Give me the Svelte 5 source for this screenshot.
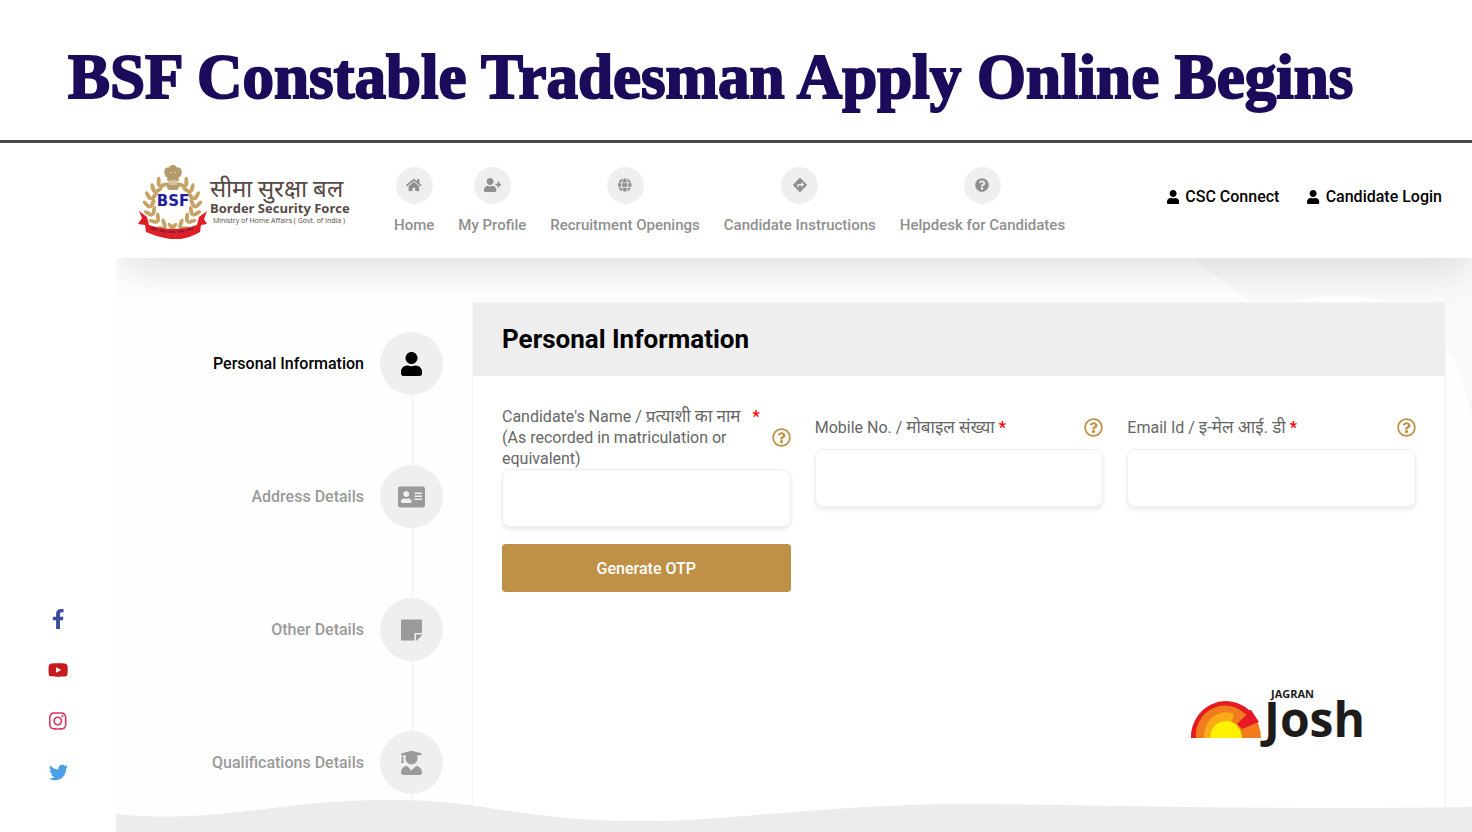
<script>
    const icons = {
        user: ['0 0 448 512', 'M224 256c70.7 0 128-57.3 128-128S294.7 0 224 0 96 57.3 96 128s57.3 128 128 128zm89.6 32h-16.7c-22.2 10.2-46.9 16-72.9 16s-50.6-5.8-72.9-16h-16.7C60.2 288 0 348.2 0 422.4V464c0 26.5 21.5 48 48 48h352c26.5 0 48-21.5 48-48v-41.6c0-74.2-60.2-134.4-134.4-134.4z'],
        home: ['0 0 576 512', 'M280.37 148.26L96 300.11V464a16 16 0 0 0 16 16l112.06-.29a16 16 0 0 0 15.92-16V368a16 16 0 0 1 16-16h64a16 16 0 0 1 16 16v95.64a16 16 0 0 0 16 16.05L464 480a16 16 0 0 0 16-16V300L295.67 148.26a12.19 12.19 0 0 0-15.3 0zM571.6 251.47L488 182.56V44.05a12 12 0 0 0-12-12h-56a12 12 0 0 0-12 12v72.61L318.47 43a48 48 0 0 0-61 0L4.34 251.47a12 12 0 0 0-1.6 16.9l25.5 31A12 12 0 0 0 45.15 301l235.22-193.74a12.19 12.19 0 0 1 15.3 0L530.9 301a12 12 0 0 0 16.9-1.6l25.5-31a12 12 0 0 0-1.7-16.93z'],
        userPlus: ['0 0 640 512', 'M624 208h-64v-64c0-8.8-7.2-16-16-16h-32c-8.8 0-16 7.2-16 16v64h-64c-8.8 0-16 7.2-16 16v32c0 8.8 7.2 16 16 16h64v64c0 8.8 7.2 16 16 16h32c8.8 0 16-7.2 16-16v-64h64c8.8 0 16-7.2 16-16v-32c0-8.8-7.2-16-16-16zm-400 48c70.7 0 128-57.3 128-128S294.7 0 224 0 96 57.3 96 128s57.3 128 128 128zm89.6 32h-16.7c-22.2 10.2-46.9 16-72.9 16s-50.6-5.8-72.9-16h-16.7C60.2 288 0 348.2 0 422.4V464c0 26.5 21.5 48 48 48h352c26.5 0 48-21.5 48-48v-41.6c0-74.2-60.2-134.4-134.4-134.4z'],
        globe: ['0 0 496 512', 'M336.5 160C322 70.7 287.8 8 248 8s-74 62.7-88.5 152h177zM152 256c0 22.2 1.2 43.5 3.3 64h185.3c2.1-20.5 3.3-41.8 3.3-64s-1.2-43.5-3.3-64H155.3c-2.1 20.5-3.3 41.8-3.3 64zm324.7-96c-28.6-67.9-86.5-120.4-158-141.6 24.4 33.8 41.2 84.7 50 141.6h108zM177.2 18.4C105.8 39.6 47.8 92.1 19.3 160h108c8.7-56.9 25.5-107.8 49.9-141.6zM487.4 192H372.7c2.1 21 3.3 42.5 3.3 64s-1.2 43-3.3 64h114.6c5.5-20.5 8.6-41.8 8.6-64s-3.1-43.5-8.5-64zM120 256c0-21.5 1.2-43 3.3-64H8.6C3.2 212.5 0 233.8 0 256s3.2 43.5 8.6 64h114.6c-2-21-3.2-42.5-3.2-64zm39.5 96c14.5 89.3 48.7 152 88.5 152s74-62.7 88.5-152h-177zm159.3 141.6c71.4-21.2 129.4-73.7 158-141.6h-108c-8.8 56.9-25.6 107.8-50 141.6zM19.3 352c28.6 67.9 86.5 120.4 158 141.6-24.4-33.8-41.2-84.7-50-141.6h-108z'],
        directions: ['0 0 512 512', 'M502.61 233.32L278.68 9.39c-12.52-12.52-32.83-12.52-45.36 0L9.39 233.32c-12.52 12.53-12.52 32.83 0 45.36l223.93 223.93c12.52 12.53 32.83 12.53 45.36 0l223.93-223.93c12.52-12.53 12.52-32.83 0-45.36zm-100.98 12.56l-84.21 77.73c-5.12 4.73-13.43 1.1-13.43-5.88V264h-96v64c0 4.42-3.58 8-8 8h-32c-4.42 0-8-3.58-8-8v-80c0-17.67 14.33-32 32-32h112v-53.73c0-6.97 8.3-10.61 13.43-5.88l84.21 77.73c3.43 3.17 3.43 8.59 0 11.76z'],
        question: ['0 0 512 512', 'M504 256c0 136.997-111.043 248-248 248S8 392.997 8 256C8 119.083 119.043 8 256 8s248 111.083 248 248zM262.655 90c-54.497 0-89.255 22.957-116.549 63.758-3.536 5.286-2.353 12.415 2.715 16.258l34.699 26.31c5.205 3.947 12.621 3.008 16.665-2.122 17.864-22.658 30.113-35.797 57.303-35.797 20.429 0 45.698 13.148 45.698 32.958 0 14.976-12.363 22.667-32.534 33.976C247.128 238.528 216 254.941 216 296v4c0 6.627 5.373 12 12 12h56c6.627 0 12-5.373 12-12v-1.333c0-28.462 83.186-29.647 83.186-106.667 0-58.002-60.165-102-116.531-102zM256 338c-25.365 0-46 20.635-46 46 0 25.364 20.635 46 46 46s46-20.636 46-46c0-25.365-20.635-46-46-46z'],
        help: ['0 0 512 512', 'M256 8C119.043 8 8 119.083 8 256c0 136.997 111.043 248 248 248s248-111.003 248-248C504 119.083 392.957 8 256 8zm0 448c-110.532 0-200-89.431-200-200 0-110.495 89.472-200 200-200 110.491 0 200 89.471 200 200 0 110.53-89.431 200-200 200zm107.244-255.2c0 67.052-72.421 68.084-72.421 92.863V300c0 6.627-5.373 12-12 12h-45.647c-6.627 0-12-5.373-12-12v-8.659c0-35.745 27.1-50.034 47.579-61.516 17.561-9.845 28.324-16.541 28.324-29.579 0-17.246-21.999-28.693-39.784-28.693-23.189 0-33.894 10.977-48.942 29.969-4.057 5.12-11.46 6.071-16.666 2.124l-27.824-21.098c-5.107-3.872-6.251-11.066-2.644-16.363C184.846 131.491 214.94 112 261.794 112c49.071 0 101.45 38.304 101.45 88.8zM298 368c0 23.159-18.841 42-42 42s-42-18.841-42-42 18.841-42 42-42 42 18.841 42 42z'],
        card: ['0 0 576 512', 'M528 32H48C21.5 32 0 53.5 0 80v352c0 26.5 21.5 48 48 48h480c26.5 0 48-21.5 48-48V80c0-26.5-21.5-48-48-48zm-352 96c35.3 0 64 28.7 64 64s-28.7 64-64 64-64-28.7-64-64 28.7-64 64-64zm112 236.8c0 10.6-10 19.2-22.4 19.2H86.4C74 384 64 375.4 64 364.8v-19.2c0-31.8 30.1-57.6 67.2-57.6h5c12.3 5.1 25.7 8 39.8 8s27.6-2.9 39.8-8h5c37.1 0 67.2 25.8 67.2 57.6v19.2zM512 312c0 4.4-3.6 8-8 8H360c-4.4 0-8-3.6-8-8v-16c0-4.4 3.6-8 8-8h144c4.4 0 8 3.6 8 8v16zm0-64c0 4.4-3.6 8-8 8H360c-4.4 0-8-3.6-8-8v-16c0-4.4 3.6-8 8-8h144c4.4 0 8 3.6 8 8v16zm0-64c0 4.4-3.6 8-8 8H360c-4.4 0-8-3.6-8-8v-16c0-4.4 3.6-8 8-8h144c4.4 0 8 3.6 8 8v16z'],
        note: ['0 0 448 512', 'M312 320h136V56c0-13.3-10.7-24-24-24H24C10.7 32 0 42.7 0 56v400c0 13.3 10.7 24 24 24h264V344c0-13.2 10.8-24 24-24zm129 55l-98 98c-4.5 4.5-10.6 7-17 7h-6V352h128v6.1c0 6.3-2.5 12.4-7 16.9z'],
        graduate: ['0 0 448 512', 'M319.4 320.6L224 416l-95.4-95.4C57.1 323.7 0 382.2 0 454.4v9.6c0 26.5 21.5 48 48 48h352c26.5 0 48-21.5 48-48v-9.6c0-72.2-57.1-130.7-128.6-133.8zM13.6 79.8l6.4 1.5v58.4c-7 4.2-12 11.5-12 20.3 0 8.4 4.6 15.4 11.1 19.7L3.5 242c-1.7 6.9 2.1 14 7.6 14h41.8c5.5 0 9.3-7.1 7.6-14l-15.6-62.3C51.4 175.4 56 168.4 56 160c0-8.8-5-16.1-12-20.3V87.1l66 15.9c-8.6 17.2-14 36.4-14 57 0 70.7 57.3 128 128 128s128-57.3 128-128c0-20.6-5.3-39.8-14-57l96.3-23.2c18.2-4.4 18.2-27.1 0-31.5l-190.4-46c-13-3.1-26.7-3.1-39.7 0L13.6 48.2c-18.1 4.4-18.1 27.2 0 31.6z'],
        facebook: ['0 0 320 512', 'M279.14 288l14.22-92.66h-88.91v-60.13c0-25.35 12.42-50.06 52.24-50.06h40.42V6.26S260.43 0 225.36 0c-73.22 0-121.08 44.38-121.08 124.72v70.62H22.89V288h81.39v224h100.17V288z'],
        youtube: ['0 0 576 512', 'M549.655 124.083c-6.281-23.65-24.787-42.276-48.284-48.597C458.781 64 288 64 288 64S117.22 64 74.629 75.486c-23.497 6.322-42.003 24.947-48.284 48.597-11.412 42.867-11.412 132.305-11.412 132.305s0 89.438 11.412 132.305c6.281 23.65 24.787 41.5 48.284 47.821C117.22 448 288 448 288 448s170.78 0 213.371-11.486c23.497-6.321 42.003-24.171 48.284-47.821 11.412-42.867 11.412-132.305 11.412-132.305s0-89.438-11.412-132.305zm-317.51 213.508V175.185l142.739 81.205-142.739 81.201z'],
        instagram: ['0 0 448 512', 'M224.1 141c-63.6 0-114.9 51.3-114.9 114.9s51.3 114.9 114.9 114.9S339 319.5 339 255.9 287.7 141 224.1 141zm0 189.6c-41.1 0-74.7-33.5-74.7-74.7s33.5-74.7 74.7-74.7 74.7 33.5 74.7 74.7-33.6 74.7-74.7 74.7zm146.4-194.3c0 14.9-12 26.8-26.8 26.8-14.9 0-26.8-12-26.8-26.8s12-26.8 26.8-26.8 26.8 12 26.8 26.8zm76.1 27.2c-1.7-35.9-9.9-67.7-36.2-93.9-26.2-26.2-58-34.4-93.9-36.2-37-2.1-147.9-2.1-184.9 0-35.8 1.7-67.6 9.9-93.9 36.1s-34.4 58-36.2 93.9c-2.1 37-2.1 147.9 0 184.9 1.7 35.9 9.9 67.7 36.2 93.9s58 34.4 93.9 36.2c37 2.1 147.9 2.1 184.9 0 35.9-1.7 67.7-9.9 93.9-36.2 26.2-26.2 34.4-58 36.2-93.9 2.1-37 2.1-147.8 0-184.8zM398.8 388c-7.8 19.6-22.9 34.7-42.6 42.6-29.5 11.7-99.5 9-132.1 9s-102.7 2.6-132.1-9c-19.6-7.8-34.7-22.9-42.6-42.6-11.7-29.5-9-99.5-9-132.1s-2.6-102.7 9-132.1c7.8-19.6 22.9-34.7 42.6-42.6 29.5-11.7 99.5-9 132.1-9s102.7-2.6 132.1 9c19.6 7.8 34.7 22.9 42.6 42.6 11.7 29.5 9 99.5 9 132.1s2.7 102.7-9 132.1z'],
        twitter: ['0 0 512 512', 'M459.37 151.716c.325 4.548.325 9.097.325 13.645 0 138.72-105.583 298.558-298.558 298.558-59.452 0-114.68-17.219-161.137-47.106 8.447.974 16.568 1.299 25.34 1.299 49.055 0 94.213-16.568 130.274-44.832-46.132-.975-84.792-31.188-98.112-72.772 6.498.974 12.995 1.624 19.818 1.624 9.421 0 18.843-1.3 27.614-3.573-48.081-9.747-84.143-51.98-84.143-102.985v-1.299c13.969 7.797 30.214 12.67 47.431 13.319-28.264-18.843-46.781-51.005-46.781-87.391 0-19.492 5.197-37.36 14.294-52.954 51.655 63.675 129.3 105.258 216.365 109.807-1.624-7.797-2.599-15.918-2.599-24.04 0-57.828 46.782-104.934 104.934-104.934 30.213 0 57.502 12.67 76.67 33.137 23.715-4.548 46.456-13.32 66.599-25.34-7.798 24.366-24.366 44.833-46.132 57.827 21.117-2.273 41.584-8.122 60.426-16.243-14.292 20.791-32.161 39.308-52.628 54.253z']
    }

    const menu = [
        { icon: 'home', label: 'Home' },
        { icon: 'userPlus', label: 'My Profile' },
        { icon: 'globe', label: 'Recruitment Openings' },
        { icon: 'directions', label: 'Candidate Instructions' },
        { icon: 'question', label: 'Helpdesk for Candidates' }
    ]

    const steps = [
        { icon: 'user', label: 'Personal Information' },
        { icon: 'card', label: 'Address Details' },
        { icon: 'note', label: 'Other Details' },
        { icon: 'graduate', label: 'Qualifications Details' }
    ]

    const social = ['facebook', 'youtube', 'instagram', 'twitter']

    const leaves = [
        [35, 67, -80], [26, 64, -55], [19, 58, -40], [14, 51, -25], [12, 43, -10],
        [13, 35, 5], [17, 28, 20], [22, 22, 35]
    ]

    let current = 0
    let name = ''
    let mobile = ''
    let email = ''
</script>

{#snippet icon(key)}
    <svg class="icon {key}" viewBox={icons[key][0]} aria-hidden="true"><path d={icons[key][1]} /></svg>
{/snippet}

{#snippet branch()}
    {#each leaves as [x, y, turn]}
        <g transform="translate({x} {y}) rotate({turn})">
            <ellipse cx="-3" cy="-2" rx="2" ry="5" transform="rotate(-35 -3 -2)" />
            <ellipse cx="3" cy="-2" rx="2" ry="5" transform="rotate(35 3 -2)" />
        </g>
    {/each}
{/snippet}

<div class="page">
    <div class="banner">
        <h1>BSF Constable Tradesman Apply Online Begins</h1>
    </div>

    <div class="body">
        <aside class="social">
            {#each social as key}
                <a href="#{key}" aria-label={key}>{@render icon(key)}</a>
            {/each}
        </aside>

        <div class="site">
            <header>
                <a class="brand" href="#home">
                    <svg class="emblem" viewBox="0 0 70 76" aria-hidden="true">
                        <g fill="#c6a264">
                            {@render branch()}
                            <g transform="translate(69 0) scale(-1 1)">{@render branch()}</g>
                        </g>
                        <path d="M20 30h30v16H20z" fill="#fff" />
                        <g fill="#b59b6a">
                            <circle cx="35" cy="6" r="4" />
                            <path d="M27 6q2-3 5-1v9h-4q-3-4-1-8zM43 6q-2-3-5-1v9h4q3-4 1-8z" />
                            <path d="M30 10h10l1 7-3 3h-6l-3-3zM29 20h12v5l-2 2h-8l-2-2z" />
                            <path d="M31 17h8v5h-8z" fill="#d5c298" />
                        </g>
                        <path d="M1 48l8 6 2 8q24 8 48 0l2-8 8-6-3 8 3 5-6 1-1 7q-8 5-19 7-8 1-16-1Q17 73 8 69l-1-7-7-1 4-6z" fill="#de1f26" />
                        <path d="M13 65q22 8 44 0" fill="none" stroke="#8e1d3d" stroke-width="2" stroke-dasharray="7 2" />
                        <text x="35" y="43" text-anchor="middle">BSF</text>
                    </svg>
                    <span class="brand-text">
                        <span class="hindi">सीमा सुरक्षा बल</span>
                        <strong>Border Security Force</strong>
                        <small>Ministry of Home Affairs ( Govt. of India )</small>
                    </span>
                </a>

                <nav>
                    {#each menu as item}
                        <a href="#menu">
                            <span class="round">{@render icon(item.icon)}</span>
                            {item.label}
                        </a>
                    {/each}
                </nav>

                <div class="login">
                    <a href="#csc">{@render icon('user')} CSC Connect</a>
                    <a href="#login">{@render icon('user')} Candidate Login</a>
                </div>
            </header>

            <main>
                <svg class="backdrop" viewBox="0 0 280 160" aria-hidden="true">
                    <path d="M0 0h280v160q-10-50-26-70L60 45z" fill="#f9f9f9" />
                    <ellipse cx="148" cy="46" rx="46" ry="8" fill="#fff" />
                </svg>

                <ol class="steps">
                    {#each steps as step, i}
                        <li class:active={i === current}>
                            <button type="button" on:click={() => (current = i)}>
                                <span>{step.label}</span>
                                <span class="round">{@render icon(step.icon)}</span>
                            </button>
                        </li>
                    {/each}
                </ol>

                <section class="panel">
                    <h2>Personal Information</h2>
                    <form on:submit|preventDefault>
                        <div class="field">
                            <div class="caption">
                                <label for="name">Candidate's Name / <span>प्रत्याशी का नाम</span> &nbsp; <b>*</b><br />(As recorded in matriculation or equivalent)</label>
                                {@render icon('help')}
                            </div>
                            <input id="name" type="text" bind:value={name} />
                        </div>
                        <div class="field">
                            <div class="caption">
                                <label for="mobile">Mobile No. / <span>मोबाइल संख्या</span> <b>*</b></label>
                                {@render icon('help')}
                            </div>
                            <input id="mobile" type="tel" bind:value={mobile} />
                        </div>
                        <div class="field">
                            <div class="caption">
                                <label for="email">Email Id / <span>इ-मेल आई. डी</span> <b>*</b></label>
                                {@render icon('help')}
                            </div>
                            <input id="email" type="email" bind:value={email} />
                        </div>
                        <button class="otp">Generate OTP</button>
                    </form>
                </section>

                <svg class="wave" viewBox="0 0 1356 32" preserveAspectRatio="none" aria-hidden="true">
                    <path d="M0 14C60 20 100 15 165 7S300-3 360 6s100 16 180 15S740 2 880 4s300 6 476 3v25H0z" fill="#ececec" />
                </svg>

                <div class="josh">
                    <svg viewBox="0 0 70 37" aria-hidden="true">
                        <path d="M0 37a35 36 0 0 1 70 0z" fill="#f07c1d" />
                        <path d="M0 37A35 36 0 0 1 58 9L54 13A29 30 0 0 0 5 37z" fill="#e51b24" />
                        <path d="M13 37a22 24 0 0 1 30-24l-2 8 6 3v13z" fill="#fbab18" />
                        <path d="M55 9l5 0 8 12-17 7-5-5 9-9z" fill="#e51b24" />
                        <path d="M19 37a16 17 0 0 1 32 0z" fill="#fff200" />
                    </svg>
                    <div class="josh-text">
                        <span>JAGRAN</span>
                        <strong>Josh</strong>
                    </div>
                </div>
            </main>
        </div>
    </div>
</div>

<style>
    :global(body) {
        margin: 0;
        background: #fff;
    }
    * {
        box-sizing: border-box;
    }
    .page {
        display: flex;
        flex-direction: column;
        min-height: 100vh;
        overflow: hidden;
        font-family: Roboto, "Noto Sans", "Noto Sans Devanagari", sans-serif;
        font-size: 16px;
        color: #000;
    }
    a {
        color: inherit;
        text-decoration: none;
    }
    .icon {
        fill: currentColor;
        height: 14px;
        flex: none;
    }

    .banner {
        padding: 41px 68px 27px;
        border-bottom: 3px solid #4a464a;
    }
    h1 {
        margin: 0;
        font: 700 63px/72px "Liberation Serif", serif;
        color: #1c0b5a;
        -webkit-text-stroke: 2px #1c0b5a;
        white-space: nowrap;
    }

    .body {
        flex: 1;
        display: flex;
    }
    .social {
        width: 116px;
        display: flex;
        flex-direction: column;
        align-items: center;
        justify-content: flex-end;
        gap: 31px;
        padding-bottom: 50px;
    }
    .social a {
        display: flex;
        height: 20px;
        align-items: center;
    }
    .social .icon {
        height: 20px;
    }
    .social .youtube {
        height: 18px;
        color: #c71a1e;
    }
    .facebook {
        color: #3b4f9a;
    }
    .instagram {
        color: #d8365f;
    }
    .social .twitter {
        height: 19px;
        color: #4ba0e8;
    }

    .site {
        flex: 1;
        min-width: 0;
        display: flex;
        flex-direction: column;
        overflow: hidden;
    }
    header {
        position: relative;
        z-index: 1;
        display: flex;
        align-items: center;
        height: 115px;
        padding: 0 30px 0 22px;
        background: #fff;
        box-shadow: 0 20px 36px -6px rgba(0, 0, 0, 0.11);
    }
    .brand {
        display: flex;
        align-items: center;
        gap: 2px;
    }
    .emblem {
        width: 70px;
        height: 76px;
    }
    .emblem text {
        font: 700 15px "DejaVu Sans", sans-serif;
        fill: #1f1f9e;
    }
    .brand-text {
        display: flex;
        flex-direction: column;
        width: 138px;
        font-family: "Open Sans", sans-serif;
        color: #564b46;
        white-space: nowrap;
    }
    .hindi {
        font-size: 24px;
        line-height: 26px;
    }
    .brand-text strong {
        font-size: 13px;
        line-height: 14px;
    }
    .brand-text small {
        font-size: 7px;
        line-height: 12px;
        text-align: center;
    }
    nav {
        display: flex;
        gap: 24px;
        margin-left: 46px;
        color: #8f8f8f;
        font-size: 15px;
        font-weight: 500;
        white-space: nowrap;
    }
    nav a {
        display: flex;
        flex-direction: column;
        align-items: center;
        gap: 11px;
        line-height: 20px;
    }
    .round {
        display: flex;
        align-items: center;
        justify-content: center;
        width: 37px;
        height: 37px;
        border-radius: 50%;
        background: #efefef;
    }
    .login {
        display: flex;
        gap: 28px;
        margin-left: auto;
        padding-bottom: 8px;
        font-weight: 500;
        white-space: nowrap;
    }
    .login a {
        display: flex;
        align-items: center;
        gap: 6px;
    }

    main {
        position: relative;
        flex: 1;
        display: flex;
        align-items: stretch;
        gap: 29px;
        padding: 44px 26px 0 0;
        background: #fefefe;
    }
    .backdrop {
        position: absolute;
        top: 0;
        right: 0;
        width: 280px;
    }
    .steps {
        flex: none;
        width: 327px;
        margin: 0;
        padding: 30px 0 0;
        list-style: none;
    }
    .steps li {
        position: relative;
        height: 133px;
        color: #9a9a9a;
    }
    .steps li:last-child {
        height: 68px;
    }
    .steps li::after {
        content: "";
        position: absolute;
        top: 63px;
        bottom: 0;
        right: 30px;
        width: 1px;
        background: #f0f0f0;
    }
    .steps button {
        display: flex;
        align-items: center;
        justify-content: flex-end;
        gap: 16px;
        width: 100%;
        padding: 0;
        border: 0;
        background: none;
        font: inherit;
        font-weight: 500;
        color: inherit;
        cursor: pointer;
    }
    .steps .active {
        color: #000;
    }
    .steps .round {
        width: 63px;
        height: 63px;
    }
    .steps .icon {
        height: 24px;
    }

    .panel {
        position: relative;
        flex: 1;
        border: 1px solid #f6f6f6;
        background: #fff;
    }
    h2 {
        margin: 0;
        padding: 20px 29px;
        background: #eee;
        font-size: 26px;
        line-height: 33px;
        font-weight: 700;
    }
    form {
        display: grid;
        grid-template-columns: repeat(3, 1fr);
        align-items: start;
        gap: 17px 24px;
        padding: 30px 29px;
    }
    .caption {
        display: flex;
        align-items: center;
        justify-content: space-between;
        min-height: 43px;
        line-height: 21px;
        color: #666;
    }
    .caption .icon {
        height: 19px;
        color: #bf9146;
    }
    .caption label span {
        font-size: 17px;
    }
    .caption b {
        color: #f00;
    }
    input {
        display: block;
        width: 100%;
        height: 58px;
        padding: 0 16px;
        border: 1px solid #efefef;
        border-radius: 8px;
        background: #fff;
        box-shadow: 0 3px 4px rgba(0, 0, 0, 0.08);
        font: inherit;
    }
    .otp {
        height: 48px;
        border: 0;
        border-radius: 4px;
        background: #bf9146;
        color: #fff;
        font: inherit;
        font-weight: 500;
        cursor: pointer;
    }
    .wave {
        position: absolute;
        left: 0;
        bottom: 0;
        width: 100%;
        height: 32px;
    }
    .josh {
        position: absolute;
        right: 107px;
        bottom: 94px;
        display: flex;
        align-items: flex-end;
        gap: 3px;
        color: #1d1b1c;
        font-family: "Open Sans", sans-serif;
    }
    .josh > svg {
        width: 70px;
        height: 37px;
    }
    .josh-text {
        display: flex;
        flex-direction: column;
    }
    .josh span {
        padding-left: 7px;
        font-size: 11px;
        line-height: 12px;
        font-weight: 700;
    }
    .josh strong {
        font-size: 48px;
        line-height: 38px;
    }
</style>
